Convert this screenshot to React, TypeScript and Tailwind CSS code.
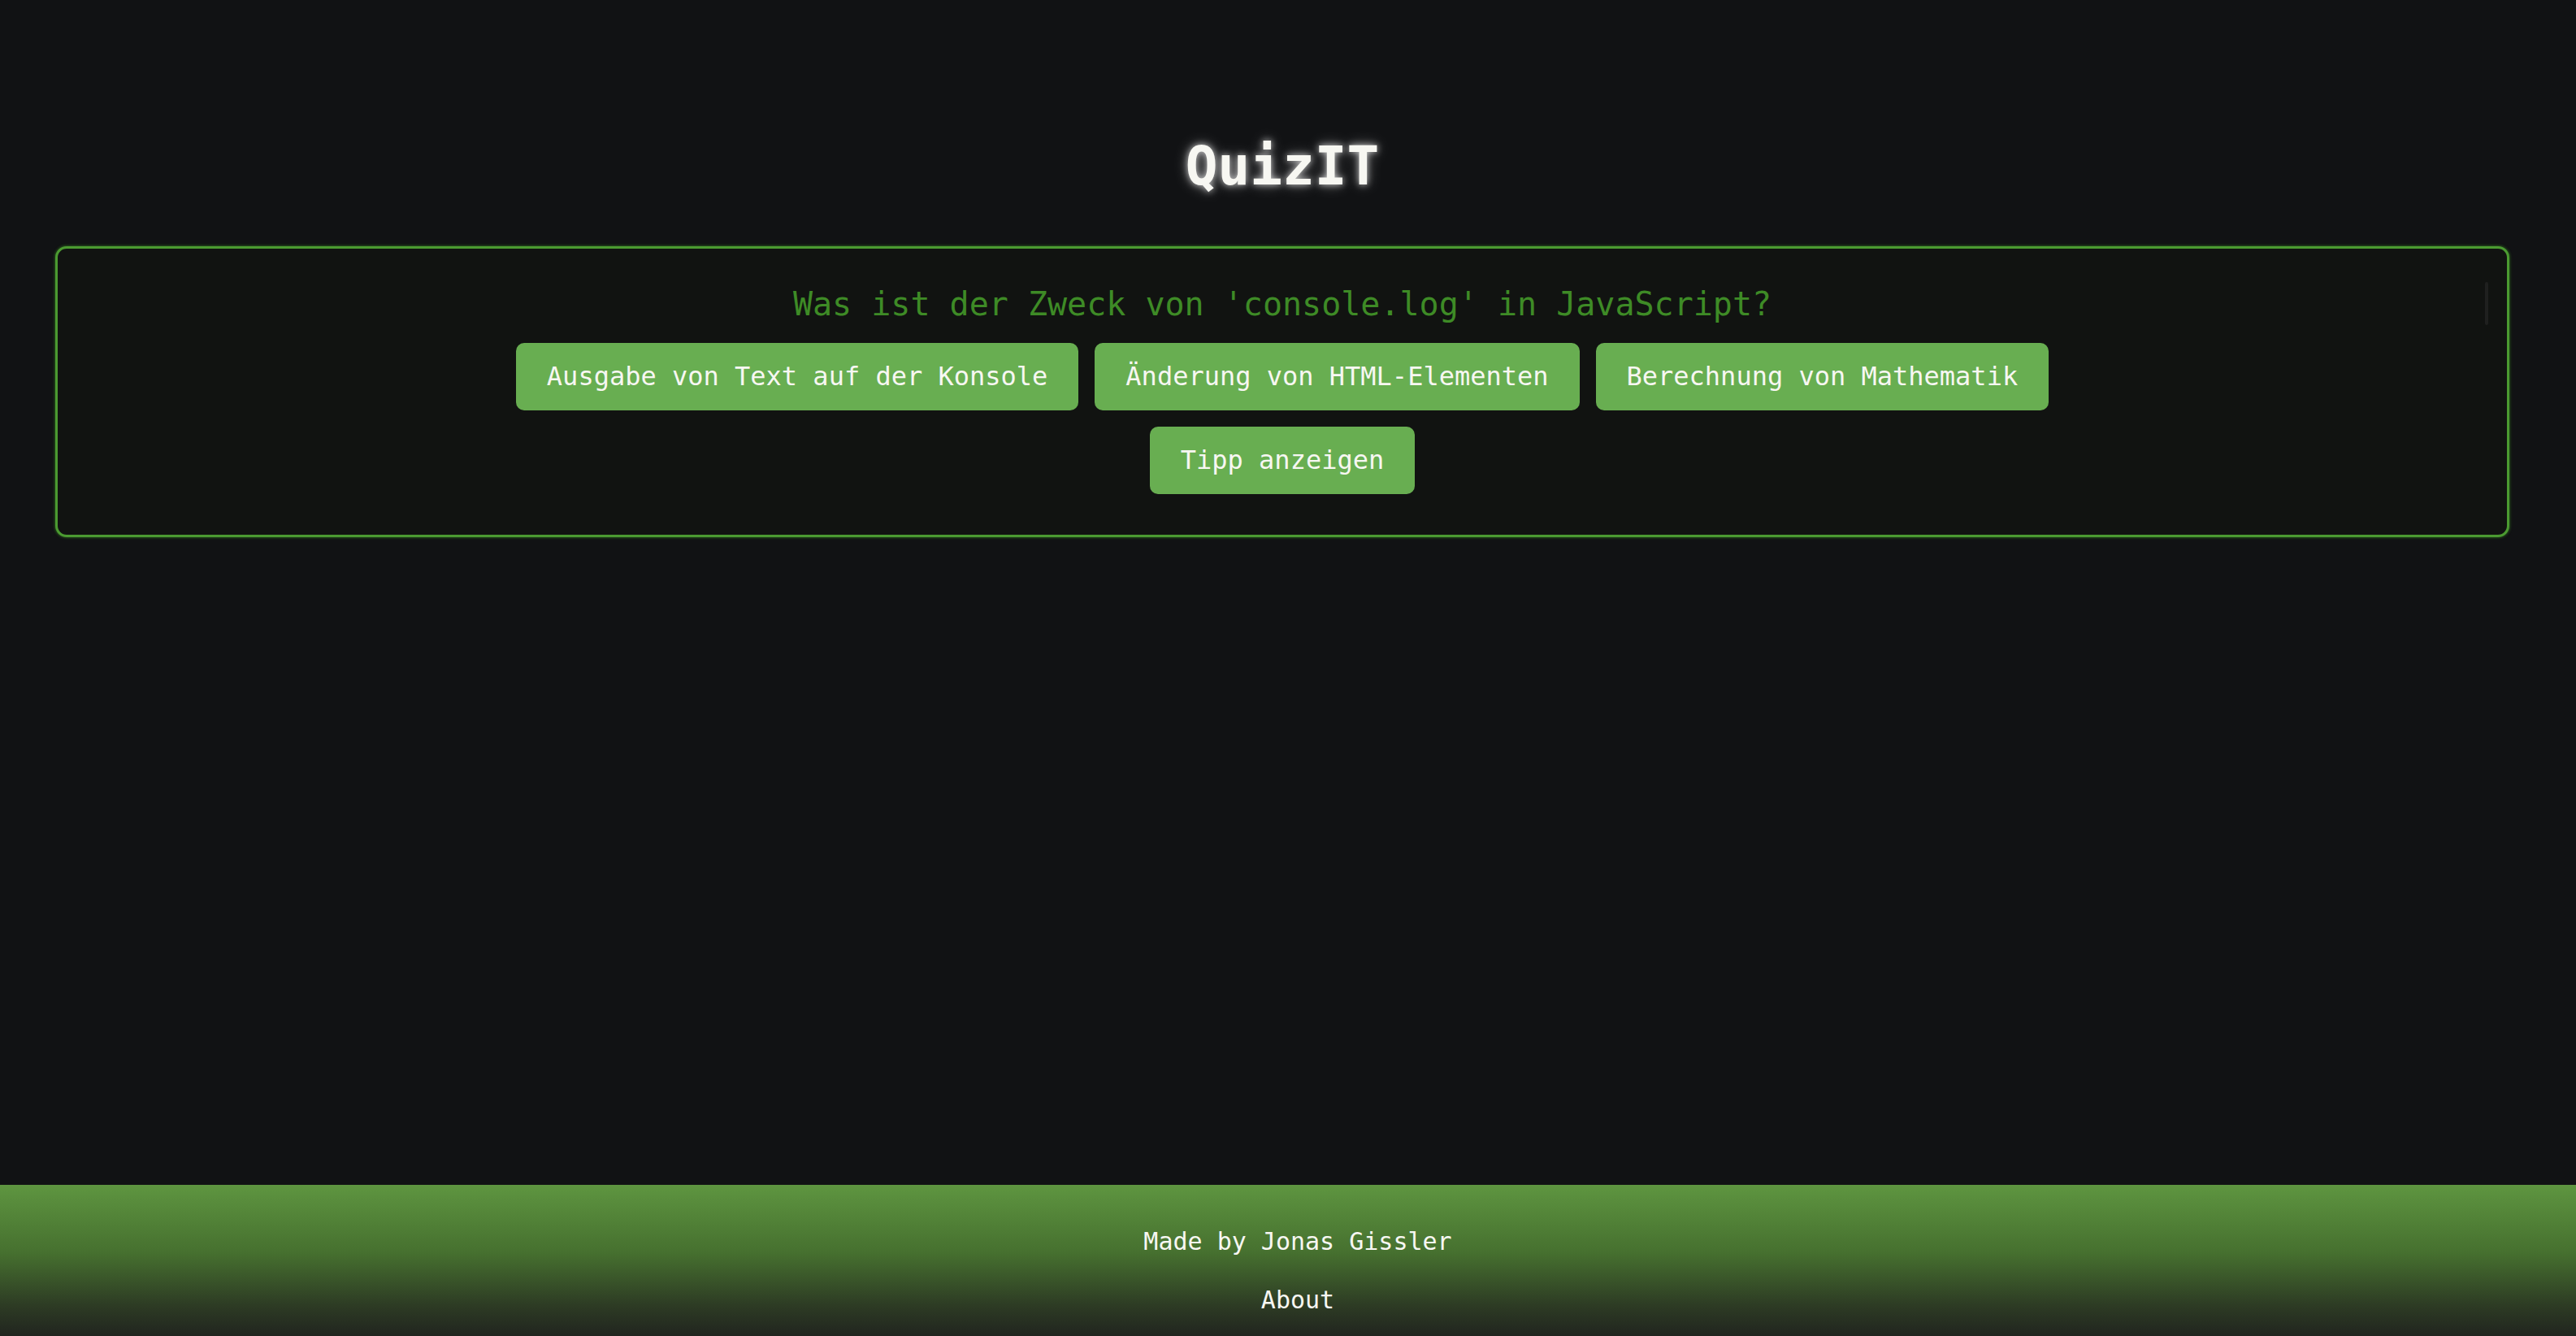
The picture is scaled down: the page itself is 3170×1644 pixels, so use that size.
import React from "react";

const mono = { fontFamily: '"DejaVu Sans Mono", "Liberation Mono", monospace' };

function Btn({ children }: { children: React.ReactNode }) {
  return (
    <button className="bg-[#68ae51] text-[#f7f7f2] text-[32px] leading-[37px] px-[38px] py-[23px] rounded-[10px] whitespace-nowrap">
      {children}
    </button>
  );
}

export default function App() {
  return (
    <div className="min-h-screen flex flex-col bg-[#111214]" style={mono}>
      <main className="flex-1 pl-[68px] pr-[82px]">
        <h1 className="text-center text-[66px] leading-[77px] font-bold text-[#f7f7f2] mt-[166px] [text-shadow:0_0_8px_rgba(255,255,255,0.75),0_0_18px_rgba(255,255,255,0.35)]">
          QuizIT
        </h1>
        <div className="relative mt-[60px] border-[3px] border-[#4b9a31] rounded-[14px] bg-[#111311] shadow-[0_0_3px_1px_rgba(40,90,28,0.9)] pt-[45px] pb-[50px] flex flex-col items-center">
          <div className="absolute right-[23px] top-[41px] w-[4px] h-[53px] bg-[#1f201f] rounded-sm" />
          <h2 className="text-[40px] leading-[47px] text-[#3e8b26]">
            Was ist der Zweck von 'console.log' in JavaScript?
          </h2>
          <div className="flex gap-[20px] mt-[24px]">
            <Btn>Ausgabe von Text auf der Konsole</Btn>
            <Btn>Änderung von HTML-Elementen</Btn>
            <Btn>Berechnung von Mathematik</Btn>
          </div>
          <div className="mt-[20px]">
            <Btn>Tipp anzeigen</Btn>
          </div>
        </div>
      </main>
      <footer className="h-[186px] bg-[linear-gradient(to_bottom,#5e9540_0%,#46702f_45%,#2d3b24_80%,#21251f_100%)] flex flex-col items-center pt-[52px] pl-[24px] gap-[37px] text-[30px] leading-[35px] text-[#f7f7f2]">
        <div>Made by Jonas Gissler</div>
        <div>About</div>
      </footer>
    </div>
  );
}
